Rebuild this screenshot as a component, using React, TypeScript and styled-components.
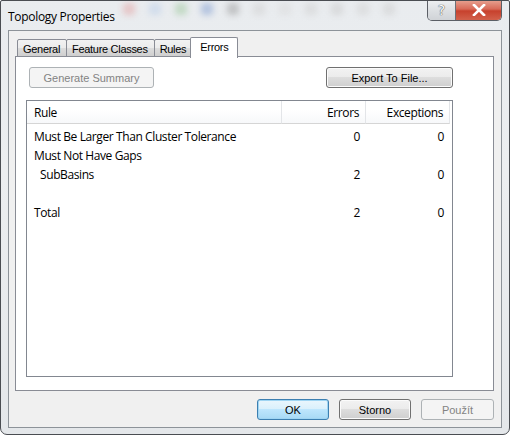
import styled, { createGlobalStyle } from "styled-components"

const GlobalStyle = createGlobalStyle`
    html, body {
        margin: 0;
        padding: 0;
        background: #ffffff;
    }
`

const tabs = ["General", "Feature Classes", "Rules", "Errors"]

const rows = [
    { rule: "Must Be Larger Than Cluster Tolerance", errors: "0", exceptions: "0" },
    { rule: "Must Not Have Gaps" },
    { rule: "SubBasins", errors: "2", exceptions: "0", indent: true },
    { rule: "" },
    { rule: "Total", errors: "2", exceptions: "0" }
]

const blobs = ["#e3a0a0", "#b9cde8", "#9cc79a", "#7f9ccf", "#9a9a9a", "#cfcfcf", "#d8d8d8", "#cfcfcf", "#c8c8c8", "#d0d0d0", "#cccccc"]

const App = () => {
    const activeTab = "Errors"

    return (
        <>
            <GlobalStyle />
            <Window>
                <TitleBar>
                    <Title>Topology Properties</Title>
                    <GlassBlur>
                        {blobs.map((color, index) => (
                            <Blob key={index} style={{ background: color }} />
                        ))}
                    </GlassBlur>
                    <CaptionButtons>
                        <HelpButton>?</HelpButton>
                        <CloseButton>
                            <svg width="14" height="12" viewBox="0 0 14 12">
                                <path d="M2 1 L12 11 M12 1 L2 11" stroke="#ffffff" strokeWidth="2.6" strokeLinecap="square" />
                            </svg>
                        </CloseButton>
                    </CaptionButtons>
                </TitleBar>
                <Client>
                    <TabStrip>
                        {tabs.map(tab => (
                            <Tab key={tab} $active={tab === activeTab}>
                                {tab}
                            </Tab>
                        ))}
                    </TabStrip>
                    <TabPanel>
                        <Toolbar>
                            <Button disabled $width={125}>
                                Generate Summary
                            </Button>
                            <Button $width={127}>Export To File...</Button>
                        </Toolbar>
                        <ListView>
                            <HeaderRow>
                                <HeaderCell>Rule</HeaderCell>
                                <HeaderCell $right>Errors</HeaderCell>
                                <HeaderCell $right>Exceptions</HeaderCell>
                            </HeaderRow>
                            {rows.map((row, index) => (
                                <Row key={index}>
                                    <Cell $indent={row.indent}>{row.rule}</Cell>
                                    <Cell $right>{row.errors}</Cell>
                                    <Cell $right>{row.exceptions}</Cell>
                                </Row>
                            ))}
                        </ListView>
                    </TabPanel>
                    <ButtonBar>
                        <Button $width={72} $default>
                            OK
                        </Button>
                        <Button $width={72}>Storno</Button>
                        <Button $width={73} disabled>
                            Použít
                        </Button>
                    </ButtonBar>
                </Client>
            </Window>
        </>
    )
}

export default App

const Window = styled.div`
    width: 510px;
    height: 435px;
    box-sizing: border-box;
    border: 1px solid #4a4d52;
    border-radius: 2px 2px 7px 7px;
    background: linear-gradient(180deg, #e9ecef 0%, #eceef0 40%, #e4e7ea 100%);
    display: flex;
    flex-direction: column;
    overflow: hidden;
`

const TitleBar = styled.div`
    height: 29px;
    display: flex;
    align-items: flex-start;
`

const Title = styled.div`
    font-family: "Open Sans", "Noto Sans", sans-serif;
    font-size: 12px;
    color: #000000;
    margin: 7px 0 0 7px;
    letter-spacing: -0.3px;
    white-space: nowrap;
`

const GlassBlur = styled.div`
    flex: 1;
    display: flex;
    gap: 14px;
    padding: 2px 0 0 8px;
    filter: blur(3px);
    opacity: 0.5;
    overflow: hidden;
    height: 24px;
`

const Blob = styled.div`
    width: 12px;
    height: 12px;
    border-radius: 3px;
    flex: none;
`

const CaptionButtons = styled.div`
    display: flex;
    margin-right: 7px;
    margin-top: -1px;
    height: 20px;
    border: 1px solid #5b5f66;
    border-top: none;
    border-radius: 0 0 5px 5px;
    overflow: hidden;
`

const HelpButton = styled.div`
    width: 27px;
    display: flex;
    align-items: center;
    justify-content: center;
    font-family: "DejaVu Sans", sans-serif;
    font-size: 14px;
    color: #ffffff;
    text-shadow: 0 0 1px #404448, 0 0 1px #404448;
    background: linear-gradient(180deg, #eef0f2 0%, #dde0e3 50%, #d0d3d7 100%);
    border-right: 1px solid #6c7077;
`

const CloseButton = styled.div`
    width: 45px;
    display: flex;
    align-items: center;
    justify-content: center;
    background: linear-gradient(180deg, #e8a493 0%, #d86a58 45%, #c7412d 55%, #d2614b 100%);
`

const Client = styled.div`
    flex: 1;
    margin: 0 7px 6px 7px;
    border: 1px solid #8d9399;
    background: #f0f0f0;
    display: flex;
    flex-direction: column;
    padding: 6px 7px 7px 6px;
`

const TabStrip = styled.div`
    display: flex;
    align-items: flex-end;
    height: 20px;
    padding-left: 2px;
    position: relative;
    z-index: 1;
`

const Tab = styled.div<{ $active?: boolean }>`
    font-family: "Liberation Sans", Arial, sans-serif;
    font-size: 11px;
    letter-spacing: -0.3px;
    color: #000000;
    height: ${props => (props.$active ? 21 : 18)}px;
    margin-bottom: ${props => (props.$active ? -1 : 0)}px;
    margin-right: -1px;
    padding: ${props => (props.$active ? "3px 9px 0 9px" : "3px 6px 0 5px")};
    margin-left: ${props => (props.$active ? -2 : 0)}px;
    box-sizing: border-box;
    border: 1px solid #898c95;
    border-bottom: ${props => (props.$active ? "none" : "1px solid #898c95")};
    border-radius: 2px 2px 0 0;
    background: ${props =>
        props.$active ? "#ffffff" : "linear-gradient(180deg, #f2f2f2 0%, #ebebeb 50%, #dddddd 50%, #cfcfcf 100%)"};
    line-height: 13px;
    position: relative;
    z-index: ${props => (props.$active ? 2 : 1)};
`

const TabPanel = styled.div`
    height: 335px;
    box-sizing: border-box;
    border: 1px solid #898c95;
    background: #ffffff;
    padding: 10px 40px 0 10px;
    display: flex;
    flex-direction: column;
    margin-top: -1px;
`

const Toolbar = styled.div`
    display: flex;
    justify-content: space-between;
    padding-left: 3px;
    margin-bottom: 12px;
`

const Button = styled.button<{ $width: number; $default?: boolean }>`
    width: ${props => props.$width}px;
    height: 21px;
    padding: 0;
    font-family: "Liberation Sans", Arial, sans-serif;
    font-size: 11px;
    color: #000000;
    border-radius: 3px;
    border: 1px solid ${props => (props.$default ? "#3c7fb1" : "#707070")};
    background: ${props =>
        props.$default
            ? "linear-gradient(180deg, #eaf6fd 0%, #d9f0fc 50%, #bee6fd 50%, #a7d9f5 100%)"
            : "linear-gradient(180deg, #f2f2f2 0%, #ebebeb 50%, #dddddd 50%, #cfcfcf 100%)"};
    box-shadow: inset 0 0 0 1px ${props => (props.$default ? "#9fd5f3" : "#fbfbfb")};

    &:disabled {
        border-color: #adb2b5;
        background: #f4f4f4;
        color: #838383;
        box-shadow: none;
    }
`

const ListView = styled.div`
    height: 277px;
    box-sizing: border-box;
    border: 1px solid #828790;
    background: #ffffff;
    display: flex;
    flex-direction: column;
`

const HeaderRow = styled.div`
    display: grid;
    grid-template-columns: 255px 84px 84px;
    height: 23px;
    margin-bottom: 3px;
`

const HeaderCell = styled.div<{ $right?: boolean }>`
    font-family: "Open Sans", "Noto Sans", sans-serif;
    font-size: 12px;
    color: #000000;
    display: flex;
    align-items: center;
    justify-content: ${props => (props.$right ? "flex-end" : "flex-start")};
    padding: 0 6px 0 7px;
    border-right: 1px solid #e3e5e8;
    border-bottom: 1px solid #d5d5d5;
    background: linear-gradient(180deg, #ffffff 0%, #ffffff 40%, #f7f8fa 100%);
    letter-spacing: -0.4px;
`

const Row = styled.div`
    display: grid;
    grid-template-columns: 255px 84px 84px;
    height: 19px;
`

const Cell = styled.div<{ $right?: boolean; $indent?: boolean }>`
    font-family: "Open Sans", "Noto Sans", sans-serif;
    font-size: 12px;
    color: #000000;
    display: flex;
    align-items: center;
    justify-content: ${props => (props.$right ? "flex-end" : "flex-start")};
    padding: 0 6px 0 ${props => (props.$indent ? 13 : 7)}px;
    white-space: nowrap;
    letter-spacing: -0.4px;
`

const ButtonBar = styled.div`
    display: flex;
    justify-content: flex-end;
    gap: 10px;
    margin-top: auto;
`
